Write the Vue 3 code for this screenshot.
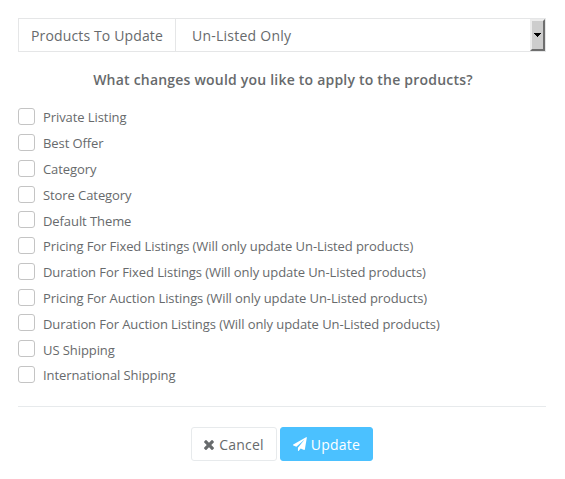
<template>
  <form class="bulk-form" @submit.prevent="">
    <div class="input-group">
      <span class="addon">Products To Update</span>
      <div class="select" role="combobox" tabindex="0">
        <span class="select-value">Un-Listed Only</span>
        <span class="select-arrow">
          <svg width="7" height="4" viewBox="0 0 7 4" shape-rendering="crispEdges"><path d="M0 0h7v1h-1v1h-1v1h-1v1h-1v-1h-1v-1h-1v-1h-1z" /></svg>
        </span>
      </div>
    </div>

    <h4 class="question">What changes would you like to apply to the products?</h4>

    <div class="options">
      <label v-for="(option, i) in options" :key="i" class="option">
        <input v-model="selected" type="checkbox" :value="option" />
        <span class="option-text">{{ option }}</span>
      </label>
    </div>

    <div class="actions">
      <button type="button" class="btn btn-default" @click="selected = []">
        <svg class="icon-times" viewBox="302 238 1188 1316"><path d="M1490 1322q0 40-28 68l-136 136q-28 28-68 28t-68-28l-294-294-294 294q-28 28-68 28t-68-28l-136-136q-28-28-28-68t28-68l294-294-294-294q-28-28-28-68t28-68l136-136q28-28 68-28t68 28l294 294 294-294q28-28 68-28t68 28l136 136q28 28 28 68t-28 68l-294 294 294 294q28 28 28 68z" /></svg>
        <span>Cancel</span>
      </button>
      <button type="submit" class="btn btn-primary">
        <svg class="icon-plane" viewBox="0 0 1792 1792"><path d="M1764 11q33 24 27 64l-256 1536q-5 29-32 45-14 8-31 8-11 0-24-5l-453-185-242 295q-18 23-49 23-13 0-22-4-19-7-30.500-23.500t-11.500-36.500v-349l864-1059-1069 925-395-162q-37-14-40-55-2-40 32-59l1664-960q15-9 32-9 20 0 36 11z" /></svg>
        <span>Update</span>
      </button>
    </div>
  </form>
</template>

<script setup>
import { ref } from 'vue'

const options = [
  'Private Listing',
  'Best Offer',
  'Category',
  'Store Category',
  'Default Theme',
  'Pricing For Fixed Listings (Will only update Un-Listed products)',
  'Duration For Fixed Listings (Will only update Un-Listed products)',
  'Pricing For Auction Listings (Will only update Un-Listed products)',
  'Duration For Auction Listings (Will only update Un-Listed products)',
  'US Shipping',
  'International Shipping'
]

const selected = ref([])
</script>

<style>
body{
  background: #fff;
}
</style>

<style scoped>
.bulk-form{
  box-sizing: border-box;
  padding: 18px 19px 0 18px;
  font-family: "Open Sans", sans-serif;
  font-size: 13px;
  color: #676a6c;
}
.input-group{
  display: flex;
  box-sizing: border-box;
  height: 34px;
  border: 1px solid #e5e6e7;
  font-size: 14px;
  line-height: 34px;
}
.addon{
  box-sizing: border-box;
  width: 157px;
  height: 32px;
  padding-left: 12px;
  border-right: 1px solid #e5e6e7;
  letter-spacing: 0.14px;
  white-space: nowrap;
}
.select{
  display: flex;
  flex: 1;
  justify-content: space-between;
  height: 32px;
  padding-left: 16px;
  letter-spacing: 0.24px;
  outline: none;
}
.select-arrow{
  box-sizing: border-box;
  display: flex;
  align-items: center;
  justify-content: center;
  width: 15px;
  height: 32px;
  border: 2px solid;
  border-color: #ececec #6e6e6e #6e6e6e #ececec;
  background: #cdcdcd;
}
.select-arrow svg{
  fill: #000;
}
.question{
  margin: 18px 0 0;
  padding-left: 2px;
  font-size: 14px;
  font-weight: 600;
  line-height: 20px;
  letter-spacing: 0.21px;
  text-align: center;
}
.options{
  padding-top: 13.83px;
}
.option{
  display: flex;
  align-items: center;
  height: 25.7815px;
}
.option input{
  appearance: none;
  box-sizing: border-box;
  flex: none;
  width: 17px;
  height: 17px;
  margin: 0 8px 0 0;
  border: 1px solid #c4c4c4;
  border-radius: 3px;
  background: #fff;
}
.option input:checked{
  background: #4bc1ff;
}
.option-text{
  padding-top: 1.56px;
  line-height: 18px;
  letter-spacing: -0.08px;
}
.actions{
  display: flex;
  justify-content: center;
  gap: 3px;
  margin-top: 18.4px;
  padding-top: 20px;
  border-top: 1px solid #e7eaec;
}
.btn{
  box-sizing: border-box;
  display: flex;
  align-items: center;
  justify-content: center;
  height: 34px;
  padding: 0 12px;
  border: 1px solid #e7eaec;
  border-radius: 3px;
  background: #fff;
  font: 14px "Open Sans", sans-serif;
  letter-spacing: 0.2px;
  color: #676a6c;
  cursor: pointer;
}
.btn svg{
  fill: currentColor;
}
.btn span{
  padding-top: 2px;
}
.btn-default{
  width: 86px;
}
.btn-primary{
  width: 93px;
  border-color: #4bc1ff;
  background: #4bc1ff;
  color: #fff;
}
.icon-times{
  width: 10px;
  height: 11px;
  margin: 2px 5px 0 0;
}
.icon-plane{
  width: 14px;
  height: 14px;
  margin: 1px 4px 0 0;
}
</style>
